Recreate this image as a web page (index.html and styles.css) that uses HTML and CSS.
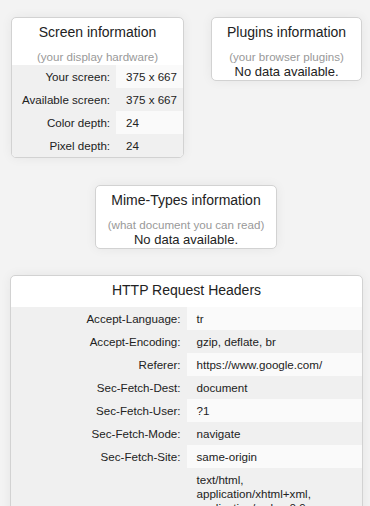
FILE: index.html
```html
<!DOCTYPE html>
<html lang="en">
<head>
    <meta charset="UTF-8">
    <meta name="viewport" content="width=device-width, initial-scale=1.0">
    <title>Browser Information</title>
    <link rel="stylesheet" href="styles.css">
</head>
<body>
    <div class="top-row">
        <div class="card">
            <h2 class="card-title">Screen information</h2>
            <p class="card-sub">(your display hardware)</p>
            <table class="info">
                <tr><th>Your screen:</th><td>375 x 667</td></tr>
                <tr><th>Available screen:</th><td>375 x 667</td></tr>
                <tr><th>Color depth:</th><td>24</td></tr>
                <tr><th>Pixel depth:</th><td>24</td></tr>
            </table>
        </div>
        <div class="card">
            <h2 class="card-title">Plugins information</h2>
            <p class="card-sub">(your browser plugins)</p>
            <p class="no-data">No data available.</p>
        </div>
    </div>

    <div class="middle-row">
        <div class="card">
            <h2 class="card-title">Mime-Types information</h2>
            <p class="card-sub">(what document you can read)</p>
            <p class="no-data">No data available.</p>
        </div>
    </div>

    <div class="card card-wide">
        <h2 class="card-title">HTTP Request Headers</h2>
        <table class="info info-wide">
            <tr><th>Accept-Language:</th><td>tr</td></tr>
            <tr><th>Accept-Encoding:</th><td>gzip, deflate, br</td></tr>
            <tr><th>Referer:</th><td>https://www.google.com/</td></tr>
            <tr><th>Sec-Fetch-Dest:</th><td>document</td></tr>
            <tr><th>Sec-Fetch-User:</th><td>?1</td></tr>
            <tr><th>Sec-Fetch-Mode:</th><td>navigate</td></tr>
            <tr><th>Sec-Fetch-Site:</th><td>same-origin</td></tr>
            <tr><th>Accept:</th><td>text/html, application/xhtml+xml, application/xml;q=0.9, image/avif, image/webp, image/apng, */*;q=0.8, application/signed-exchange;v=b3;q=0.7</td></tr>
            <tr><th>Upgrade-Insecure-Requests:</th><td>1</td></tr>
            <tr><th>Host:</th><td>www.whatismybrowser.com</td></tr>
        </table>
    </div>
</body>
</html>
```

FILE: styles.css
```css
body {
    font-family: 'Liberation Sans', Arial, sans-serif;
    margin: 0;
    padding: 0;
    background-color: #f3f3f3;
    color: #222;
}
.top-row {
    display: flex;
    align-items: flex-start;
    gap: 27px;
    padding: 17px 0 0 11px;
}
.middle-row {
    display: flex;
    justify-content: center;
    padding-left: 2px;
    margin-top: 27px;
}
.card {
    background-color: #fff;
    border: 1px solid #d2d2d2;
    border-radius: 5px;
    box-shadow: 0 0 12px rgba(0, 0, 0, 0.06);
    overflow: hidden;
    text-align: center;
}
.card-wide {
    margin: 26px 7px 0 10px;
}
.card-title {
    margin: 0;
    padding: 6px 15px 8px;
    font-size: 14px;
    line-height: 17px;
    font-weight: normal;
}
.card-sub {
    margin: 0;
    font-size: 11.6px;
    line-height: 15px;
    color: #999;
}
.no-data {
    margin: 0;
    font-size: 13px;
    line-height: 16px;
}
.info {
    border-collapse: collapse;
    margin-top: 1px;
    font-size: 11.6px;
    line-height: 14px;
}
.info th,
.info td {
    padding: 4.5px 6px 4.5px 10px;
    vertical-align: middle;
}
.info th {
    font-weight: normal;
    text-align: right;
    background-color: #f0f0f0;
    white-space: nowrap;
}
.info td {
    text-align: left;
    background-color: #fafafa;
}
.info tr:nth-child(even) td {
    background-color: #f0f0f0;
}
.info-wide {
    width: 100%;
    margin-top: 0;
}
.info-wide th {
    width: 50%;
}
```
